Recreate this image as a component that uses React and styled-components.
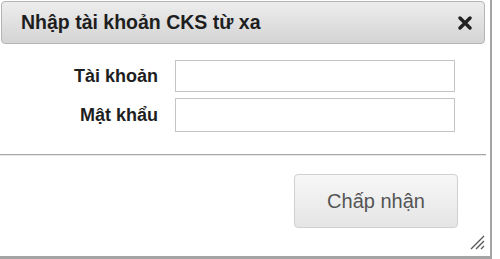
import styled, { createGlobalStyle } from "styled-components";

const GlobalStyle = createGlobalStyle`
    body {
        margin: 0;
        background: #fff;
        font-family: 'Liberation Sans', Arial, sans-serif;
    }
`;

const Dialog = styled.div`
    position: relative;
    box-sizing: border-box;
    width: 492px;
    height: 259px;
    background: #fff;
    border-right: 2px solid #a4a4a4;
    border-bottom: 3px solid #a4a4a4;
    display: flex;
    flex-direction: column;
`;

const TitleBar = styled.div`
    box-sizing: border-box;
    height: 43px;
    margin: 1px 5px 0 1px;
    padding: 0 12px 0 19px;
    border: 1px solid #b4b4b4;
    border-radius: 4px;
    background: linear-gradient(#ededed, #d4d4d4);
    display: flex;
    align-items: center;
    justify-content: space-between;
`;

const Title = styled.span`
    font-size: 19.5px;
    font-weight: bold;
    color: #1e1e1e;
`;

const Close = styled.button`
    border: none;
    background: none;
    padding: 0;
    width: 14px;
    height: 14px;
    display: flex;
    cursor: pointer;
`;

const Content = styled.div`
    width: 486px;
    height: 111px;
    box-sizing: border-box;
    padding-top: 16px;
    border-bottom: 1px solid #a8a8a8;
`;

const Form = styled.form`
    display: grid;
    grid-template-columns: 158px 280px;
    column-gap: 17px;
    row-gap: 6px;
    align-items: center;
`;

const Label = styled.label`
    text-align: right;
    font-size: 18px;
    font-weight: bold;
    color: #1e1e1e;
`;

const TextInput = styled.input`
    box-sizing: border-box;
    width: 280px;
    height: ${p => p.$h}px;
    border: 1px solid #c4c4c4;
    font-size: 16px;
    padding: 0 6px;
    outline: none;
`;

const ButtonPane = styled.div`
    flex: 1;
    width: 486px;
    border-top: 1px solid #e6e6e6;
    display: flex;
    justify-content: flex-end;
    align-items: flex-start;
    padding: 18px 28px 0 0;
    box-sizing: border-box;
`;

const Button = styled.button`
    width: 164px;
    height: 54px;
    border: 1px solid #d0d0d0;
    border-radius: 4px;
    background: linear-gradient(#f7f7f7, #e5e5e5);
    font-family: 'Liberation Sans', Arial, sans-serif;
    font-size: 20px;
    color: #555;
    cursor: pointer;
`;

const Grip = styled.svg`
    position: absolute;
    right: 5px;
    bottom: 6px;
`;

export default function App() {
    return (
        <>
            <GlobalStyle />
            <Dialog>
                <TitleBar>
                    <Title>Nhập tài khoản CKS từ xa</Title>
                    <Close aria-label="close">
                        <svg width="14" height="14" viewBox="0 0 14 14">
                            <path d="M2 2 L12 12 M12 2 L2 12" stroke="#222" strokeWidth="3.4" strokeLinecap="round" />
                        </svg>
                    </Close>
                </TitleBar>
                <Content>
                    <Form>
                        <Label>Tài khoản</Label>
                        <TextInput type="text" $h={32} />
                        <Label>Mật khẩu</Label>
                        <TextInput type="password" $h={34} />
                    </Form>
                </Content>
                <ButtonPane>
                    <Button>Chấp nhận</Button>
                </ButtonPane>
                <Grip width="16" height="16" viewBox="0 0 16 16">
                    <path d="M15 2 L2 15 M15 7 L7 15 M15 12 L12 15" stroke="#555" strokeWidth="1.3" />
                </Grip>
            </Dialog>
        </>
    );
}
